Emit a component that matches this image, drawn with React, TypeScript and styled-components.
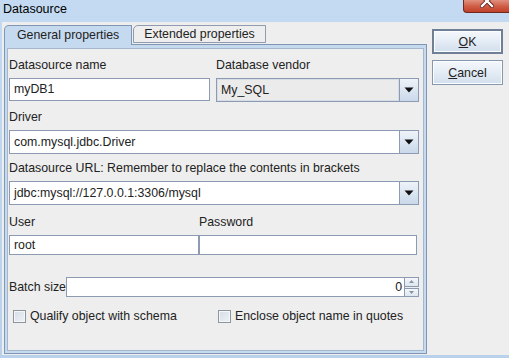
import React from "react";
import styled, { createGlobalStyle } from "styled-components";

const GlobalStyle = createGlobalStyle`
  html, body {
    margin: 0;
    padding: 0;
    background: #bcd3ec;
  }
  body {
    font-family: "Liberation Sans", Arial, sans-serif;
    font-size: 12.35px;
    color: #222;
  }
`;

const FIELD_BORDER = "#8c9bb1";

const Window = styled.div`
  width: 509px;
  height: 358px;
  display: flex;
  flex-direction: column;
  background: linear-gradient(180deg, #c3daf2 0%, #b9d1ea 100%);
  overflow: hidden;
`;

const TitleBar = styled.div`
  height: 22px;
  display: flex;
  align-items: flex-start;
  flex-shrink: 0;
`;

const Title = styled.div`
  padding: 2px 0 0 3px;
  line-height: 15px;
  font-size: 12.5px;
  color: #000;
`;

const CloseButton = styled.div`
  margin-left: auto;
  width: 45px;
  height: 12px;
  border: 1px solid #6e2a1f;
  border-top: none;
  border-right: none;
  border-bottom-left-radius: 4px;
  background: linear-gradient(180deg, #e0907e 0%, #cf5a43 55%, #c0402b 100%);
  display: flex;
  justify-content: center;
  overflow: hidden;
  svg {
    margin-top: -6px;
  }
`;

const Body = styled.div`
  flex: 1;
  display: flex;
  background: #eeeeee;
  margin: 0 0 3px 2px;
  padding-top: 3px;
`;

const TabArea = styled.div`
  width: 423px;
  margin: 0 0 1px 2px;
  display: flex;
  flex-direction: column;
`;

const TabStrip = styled.div`
  display: flex;
  height: 19px;
`;

const Tab = styled.div<{ active?: boolean }>`
  height: ${(p) => (p.active ? 20 : 18)}px;
  margin-bottom: ${(p) => (p.active ? -1 : 0)}px;
  padding: 0 ${(p) => (p.active ? 12 : 10)}px;
  display: flex;
  align-items: center;
  box-sizing: border-box;
  border: 1px solid ${(p) => (p.active ? "#8196b5" : "#8e9bb0")};
  border-bottom: ${(p) => (p.active ? "none" : "1px solid #8e9bb0")};
  border-top-left-radius: 5px;
  background: ${(p) => (p.active ? "#c6daef" : "#eeeeee")};
  color: #222;
  line-height: 15px;
  position: relative;
  z-index: ${(p) => (p.active ? 1 : 0)};
  & + & {
    margin-left: 1px;
  }
`;

const Panel = styled.div`
  flex: 1;
  border: 1px solid #8196b5;
  background: #c6daef;
  padding: 3px 2px 2px 2px;
  display: flex;
`;

const PanelInner = styled.div`
  flex: 1;
  background: #eeeeee;
  border: 1px solid #a7b7cb;
  padding: 9px 4px 0 1px;
  display: flex;
  flex-direction: column;
`;

const Label = styled.div<{ gap?: number }>`
  height: 15px;
  line-height: 15px;
  margin-top: ${(p) => p.gap || 0}px;
  margin-bottom: 5px;
  white-space: nowrap;
`;

const Row = styled.div<{ cols: string; gap?: number; colGap?: number }>`
  display: grid;
  grid-template-columns: ${(p) => p.cols};
  column-gap: ${(p) => p.colGap || 0}px;
  margin-top: ${(p) => p.gap || 0}px;
`;

const Cell = styled.div`
  display: flex;
  flex-direction: column;
  min-width: 0;
`;

const TextInput = styled.div<{ h?: number }>`
  height: ${(p) => p.h || 23}px;
  box-sizing: border-box;
  border: 1px solid ${FIELD_BORDER};
  background: #fff;
  padding: 0 4px;
  display: flex;
  align-items: center;
  line-height: 15px;
  white-space: nowrap;
  overflow: hidden;
`;

const Combo = styled.div<{ editable?: boolean }>`
  height: 24px;
  box-sizing: border-box;
  border: 1px solid ${FIELD_BORDER};
  background: ${(p) => (p.editable ? "#fff" : "#ebebeb")};
  display: flex;
  align-items: stretch;
`;

const ComboValue = styled.div<{ editable?: boolean }>`
  flex: 1;
  display: flex;
  align-items: center;
  padding: 0 4px;
  white-space: nowrap;
  overflow: hidden;
  ${(p) => (!p.editable ? "box-shadow: inset 0 0 0 1px #d6dde6;" : "")}
`;

const ArrowButton = styled.div`
  width: 18px;
  border-left: 1px solid ${FIELD_BORDER};
  background: linear-gradient(180deg, #eef3f9 0%, #dce6f2 50%, #c9d8ea 100%);
  display: flex;
  align-items: center;
  justify-content: center;
`;

const SpinnerRow = styled.div`
  display: flex;
  align-items: center;
  margin-top: 22px;
  height: 20px;
`;

const SpinnerLabel = styled.div`
  width: 57px;
  white-space: nowrap;
`;

const SpinnerField = styled.div`
  flex: 1;
  height: 20px;
  box-sizing: border-box;
  border: 1px solid ${FIELD_BORDER};
  background: #fff;
  display: flex;
  align-items: center;
  justify-content: flex-end;
  padding-right: 2px;
`;

const SpinnerButtons = styled.div`
  width: 14px;
  height: 20px;
  display: flex;
  flex-direction: column;
  gap: 1px;
`;

const SpinButton = styled.div`
  flex: 1;
  box-sizing: border-box;
  border: 1px solid ${FIELD_BORDER};
  border-left: none;
  background: linear-gradient(180deg, #f4f7fb 0%, #dde6f0 100%);
  display: flex;
  align-items: center;
  justify-content: center;
`;

const CheckRow = styled.div`
  display: grid;
  grid-template-columns: 205px 1fr;
  margin-top: 12px;
`;

const CheckItem = styled.label`
  display: flex;
  align-items: center;
  gap: 4px;
  padding-left: 4px;
  height: 15px;
  line-height: 15px;
  white-space: nowrap;
`;

const CheckBox = styled.span`
  width: 13px;
  height: 13px;
  box-sizing: border-box;
  border: 1px solid #8f959c;
  background: linear-gradient(135deg, #d5dde7 0%, #eef2f6 100%);
  box-shadow: inset 0 0 0 1px #f4f6f8;
`;

const ButtonColumn = styled.div`
  display: flex;
  flex-direction: column;
  gap: 6px;
  margin: 4px 0 0 5px;
`;

const Button = styled.div<{ primary?: boolean }>`
  width: 71px;
  height: 25px;
  box-sizing: border-box;
  border: ${(p) => (p.primary ? "2px solid #6f7f95" : "1px solid #8797ae")};
  background: linear-gradient(180deg, #f5f8fc 0%, #e4ecf5 50%, #d2dfed 100%);
  box-shadow: inset 0 0 0 1px #fbfcfe;
  display: flex;
  align-items: center;
  justify-content: center;
  color: #222;
  u {
    text-decoration: underline;
  }
`;

function DropArrow() {
  return (
    <svg width="10" height="6" viewBox="0 0 10 6">
      <path d="M0.5 0.5 H9.5 L5 5.5 Z" fill="#111" />
    </svg>
  );
}

function Combobox(props: { value: string; editable?: boolean }) {
  return (
    <Combo editable={props.editable}>
      <ComboValue editable={props.editable}>{props.value}</ComboValue>
      <ArrowButton>
        <DropArrow />
      </ArrowButton>
    </Combo>
  );
}

function Spinner(props: { value: number }) {
  return (
    <>
      <SpinnerField>{props.value}</SpinnerField>
      <SpinnerButtons>
        <SpinButton>
          <svg width="5" height="3" viewBox="0 0 5 3">
            <path d="M0 3 L2.5 0 L5 3 Z" fill="#8a94a0" />
          </svg>
        </SpinButton>
        <SpinButton>
          <svg width="5" height="3" viewBox="0 0 5 3">
            <path d="M0 0 L2.5 3 L5 0 Z" fill="#8a94a0" />
          </svg>
        </SpinButton>
      </SpinnerButtons>
    </>
  );
}

export default function App() {
  return (
    <>
      <GlobalStyle />
      <Window>
        <TitleBar>
          <Title>Datasource</Title>
          <CloseButton>
            <svg width="14" height="14" viewBox="0 0 14 14">
              <path
                d="M2 2 L12 12 M12 2 L2 12"
                stroke="#5a1a12"
                strokeWidth="4"
                strokeLinecap="square"
              />
              <path
                d="M2 2 L12 12 M12 2 L2 12"
                stroke="#fff"
                strokeWidth="2.4"
                strokeLinecap="square"
              />
            </svg>
          </CloseButton>
        </TitleBar>
        <Body>
          <TabArea>
            <TabStrip>
              <Tab active>General properties</Tab>
              <Tab>Extended properties</Tab>
            </TabStrip>
            <Panel>
              <PanelInner>
                <Row cols="201px 1fr" colGap={6}>
                  <Cell>
                    <Label>Datasource name</Label>
                    <TextInput>myDB1</TextInput>
                  </Cell>
                  <Cell>
                    <Label>Database vendor</Label>
                    <Combobox value="My_SQL" />
                  </Cell>
                </Row>

                <Label gap={8}>Driver</Label>
                <Combobox value="com.mysql.jdbc.Driver" editable />

                <Label gap={7}>
                  Datasource URL: Remember to replace the contents in brackets
                </Label>
                <Combobox value="jdbc:mysql://127.0.0.1:3306/mysql" editable />

                <Row cols="190px 218px" colGap={0} gap={10}>
                  <Cell>
                    <Label>User</Label>
                    <TextInput h={20}>root</TextInput>
                  </Cell>
                  <Cell>
                    <Label>Password</Label>
                    <TextInput h={20} />
                  </Cell>
                </Row>

                <SpinnerRow>
                  <SpinnerLabel>Batch size</SpinnerLabel>
                  <Spinner value={0} />
                </SpinnerRow>

                <CheckRow>
                  <CheckItem>
                    <CheckBox />
                    Qualify object with schema
                  </CheckItem>
                  <CheckItem>
                    <CheckBox />
                    Enclose object name in quotes
                  </CheckItem>
                </CheckRow>
              </PanelInner>
            </Panel>
          </TabArea>
          <ButtonColumn>
            <Button primary>
              <span>
                <u>O</u>K
              </span>
            </Button>
            <Button>
              <span>
                <u>C</u>ancel
              </span>
            </Button>
          </ButtonColumn>
        </Body>
      </Window>
    </>
  );
}
